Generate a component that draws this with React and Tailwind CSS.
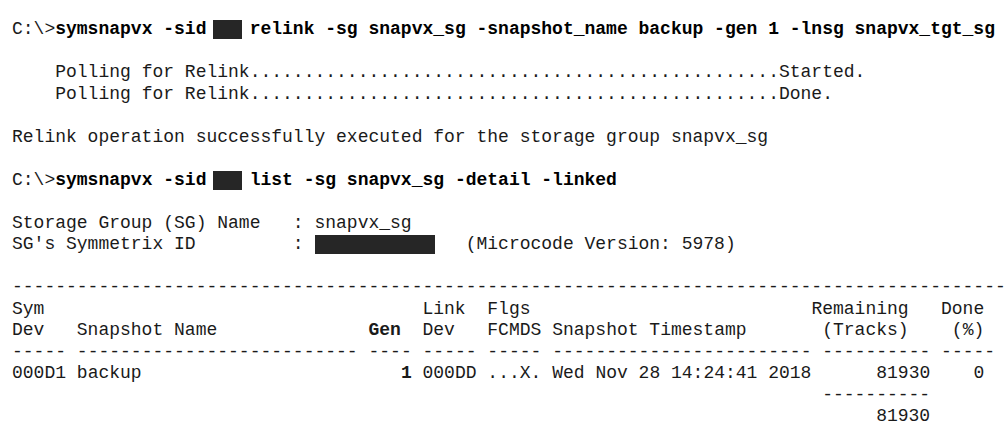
import React from "react";

function Redact({ cols, width, shift }) {
  return (
    <span className="inline-block align-top" style={{ width: `${cols}ch` }}>
      <span
        className="inline-block h-[19px] bg-[#262626] translate-y-[1px]"
        style={{ width: `${width}px`, marginLeft: `${shift}px` }}
      />
    </span>
  );
}

const Line = ({ children }) => <div className="h-[21.5px]">{children || " "}</div>;

// lay out pieces at fixed character columns: [col, text, bold]
function Cols({ items }) {
  let pos = 0;
  const out = [];
  items.forEach(([col, text, bold], i) => {
    const pad = " ".repeat(Math.max(0, col - pos));
    out.push(pad);
    out.push(bold ? <b key={i}>{text}</b> : <span key={i}>{text}</span>);
    pos = col + text.length;
  });
  return <Line>{out}</Line>;
}

const dash = (n) => "-".repeat(n);

export default function App() {
  return (
    <div className="w-[1005px] h-[437px] overflow-hidden bg-white pl-[12px] pt-[19px] font-['Liberation_Mono','Courier_New',monospace] text-[18px] leading-[21.5px] text-[#1a1a1a] whitespace-pre">
      <Line>
        C:\&gt;<b className="text-black">symsnapvx -sid </b>
        <Redact cols={2} width={29} shift={-4} />
        <b className="text-black"> relink -sg snapvx_sg -snapshot_name backup -gen 1 -lnsg snapvx_tgt_sg</b>
      </Line>
      <Line />
      <Cols items={[[4, "Polling for Relink" + ".".repeat(49) + "Started."]]} />
      <Cols items={[[4, "Polling for Relink" + ".".repeat(49) + "Done."]]} />
      <Line />
      <Line>Relink operation successfully executed for the storage group snapvx_sg</Line>
      <Line />
      <Line>
        C:\&gt;<b className="text-black">symsnapvx -sid </b>
        <Redact cols={2} width={29} shift={-4} />
        <b className="text-black"> list -sg snapvx_sg -detail -linked</b>
      </Line>
      <Line />
      <Line>Storage Group (SG) Name   : snapvx_sg</Line>
      <Line>
        {"SG's Symmetrix ID         : "}
        <Redact cols={14} width={120} shift={1} />
        (Microcode Version: 5978)
      </Line>
      <Line />
      <Line>{dash(92)}</Line>
      <Cols items={[[0, "Sym"], [38, "Link"], [44, "Flgs"], [74, "Remaining"], [86, "Done"]]} />
      <Cols
        items={[
          [0, "Dev"],
          [6, "Snapshot Name"],
          [33, "Gen", true],
          [38, "Dev"],
          [44, "FCMDS"],
          [50, "Snapshot Timestamp"],
          [75, "(Tracks)"],
          [87, "(%)"],
        ]}
      />
      <Cols
        items={[
          [0, dash(5)],
          [6, dash(26)],
          [33, dash(4)],
          [38, dash(5)],
          [44, dash(5)],
          [50, dash(24)],
          [75, dash(10)],
          [86, dash(5)],
        ]}
      />
      <Cols
        items={[
          [0, "000D1"],
          [6, "backup"],
          [36, "1", true],
          [38, "000DD"],
          [44, "...X."],
          [50, "Wed Nov 28 14:24:41 2018"],
          [80, "81930"],
          [89, "0"],
        ]}
      />
      <Cols items={[[75, dash(10)]]} />
      <Cols items={[[80, "81930"]]} />
    </div>
  );
}
